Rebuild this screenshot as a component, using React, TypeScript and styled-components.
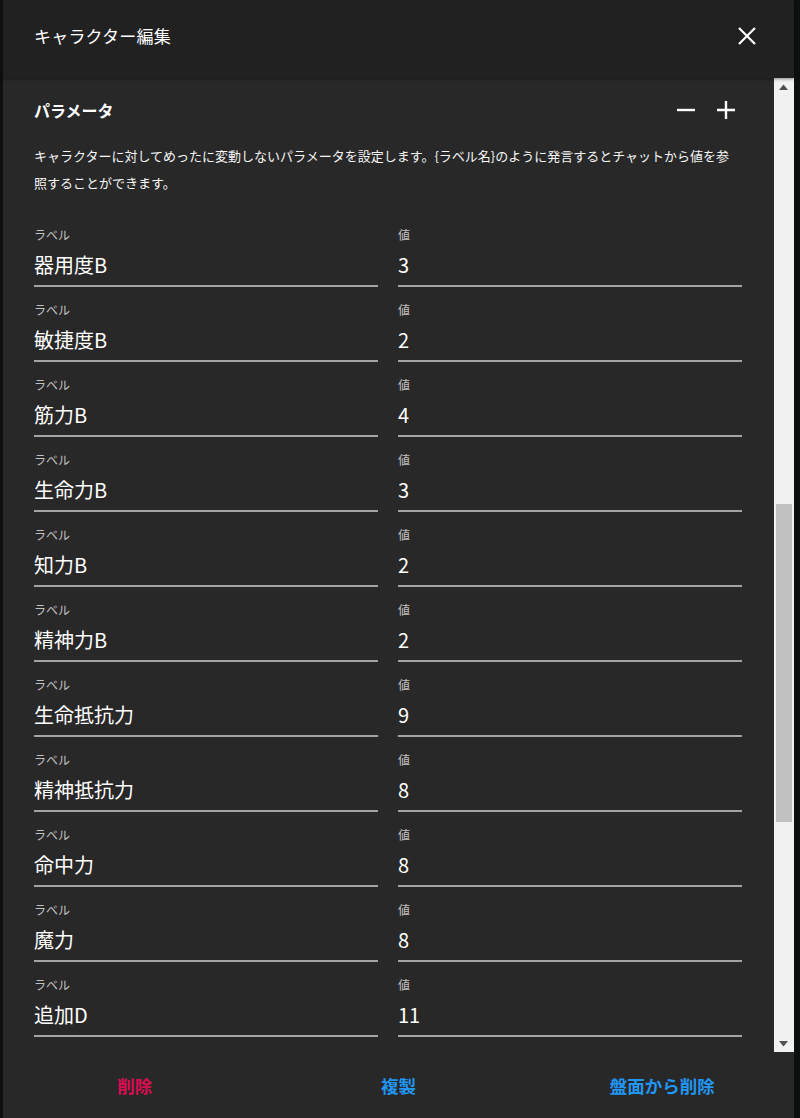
import styled, {createGlobalStyle} from "styled-components";

const GlobalStyle = createGlobalStyle`
  html, body {
    margin: 0;
    padding: 0;
    background: #0e1010;
  }
  body {
    font-family: "Noto Sans CJK JP", "Noto Sans", Roboto, sans-serif;
    color: #fff;
  }
`;

const params: [string, string][] = [
  ["器用度B", "3"],
  ["敏捷度B", "2"],
  ["筋力B", "4"],
  ["生命力B", "3"],
  ["知力B", "2"],
  ["精神力B", "2"],
  ["生命抵抗力", "9"],
  ["精神抵抗力", "8"],
  ["命中力", "8"],
  ["魔力", "8"],
  ["追加D", "11"],
];

const description =
  "キャラクターに対してめったに変動しないパラメータを設定します。{ラベル名}のように発言するとチャットから値を参照することができます。";

// scroll state of the dialog body, as the screenshot shows it
const scroll = {thumbTop: 409, thumbHeight: 318};

const Backdrop = styled.div`
  width: 800px;
  height: 1118px;
  background: #0e1010;
  padding-left: 3px;
  box-sizing: border-box;
  overflow: hidden;
`;

const Dialog = styled.div`
  width: 791px;
  height: 1118px;
  display: flex;
  flex-direction: column;
  background: #282828;
`;

const Header = styled.header`
  position: relative;
  z-index: 1;
  height: 78px;
  flex: none;
  box-sizing: border-box;
  padding: 0 23px 6px 31px;
  display: flex;
  align-items: center;
  justify-content: space-between;
  background: #212121;
  box-shadow: 0 1px 3px rgba(0, 0, 0, 0.45);
`;

const Title = styled.h2`
  margin: 0;
  font-size: 17px;
  font-weight: 400;
  line-height: 24px;
  letter-spacing: 0.2px;
`;

const IconButton = styled.button<{ $size: number }>`
  width: ${(p) => p.$size}px;
  height: ${(p) => p.$size}px;
  flex: none;
  padding: 0;
  border: none;
  background: transparent;
  color: #fff;
  display: flex;
  align-items: center;
  justify-content: center;
  cursor: pointer;
`;

const Body = styled.div`
  position: relative;
  flex: 1;
  overflow: hidden;
  padding: 20px 52px 0 31px;
`;

const SectionHead = styled.div`
  height: 24px;
  display: flex;
  align-items: center;
  justify-content: space-between;
`;

const SectionTitle = styled.h3`
  margin: 0;
  font-size: 16px;
  font-weight: 700;
  line-height: 24px;
`;

const HeadActions = styled.div`
  display: flex;
  gap: 8px;
`;

const Description = styled.p`
  margin: 20px 0 0;
  font-size: 13px;
  line-height: 27px;
  color: #f6f6f6;
`;

const FieldGrid = styled.div`
  margin-top: 30px;
  display: grid;
  grid-template-columns: 1fr 1fr;
  column-gap: 20px;
  row-gap: 14px;
`;

const Field = styled.label`
  display: flex;
  flex-direction: column;
`;

const FieldLabel = styled.span`
  font-size: 12px;
  line-height: 18px;
  color: rgba(255, 255, 255, 0.72);
`;

const InputBox = styled.div`
  margin-top: 6px;
  padding-bottom: 5px;
  border-bottom: 2px solid #a4a4a4;
`;

const Input = styled.input`
  display: block;
  width: 100%;
  height: 30px;
  padding: 0;
  border: none;
  outline: none;
  background: transparent;
  color: #fff;
  font-family: inherit;
  font-size: 20px;
  line-height: 30px;
`;

const Scrollbar = styled.div`
  position: absolute;
  top: 0;
  right: 0;
  bottom: 0;
  width: 20px;
  display: flex;
  flex-direction: column;
  background: #f1f1f1;
`;

const ScrollArrow = styled.div`
  height: 17px;
  flex: none;
  display: flex;
  align-items: center;
  justify-content: center;
  padding-right: 1px;
`;

const ScrollTrack = styled.div`
  flex: 1;
  position: relative;
`;

const ScrollThumb = styled.div`
  position: absolute;
  left: 2px;
  right: 2px;
  background: #c1c1c1;
`;

const Footer = styled.footer`
  height: 66px;
  flex: none;
  display: flex;
  align-items: center;
`;

const FooterButton = styled.button<{ $danger?: boolean }>`
  flex: 1;
  height: 44px;
  border: none;
  background: transparent;
  font-family: inherit;
  font-size: 17.5px;
  font-weight: 700;
  color: ${(p) => (p.$danger ? "#dc0c52" : "#2196f3")};
  cursor: pointer;
`;

const CloseIcon = () => (
  <svg width="20" height="20" viewBox="0 0 20 20">
    <path d="M2 2 L18 18 M18 2 L2 18" stroke="#fff" strokeWidth="2.2" fill="none"/>
  </svg>
);

const MinusIcon = () => (
  <svg width="20" height="20" viewBox="0 0 20 20">
    <path d="M1 10 H19" stroke="#fff" strokeWidth="2.4" fill="none"/>
  </svg>
);

const PlusIcon = () => (
  <svg width="20" height="20" viewBox="0 0 20 20">
    <path d="M1 10 H19 M10 1 V19" stroke="#fff" strokeWidth="2.4" fill="none"/>
  </svg>
);

const Triangle = ({down}: { down?: boolean }) => (
  <svg width="9" height="6" viewBox="0 0 9 6">
    <path d={down ? "M0 0 H9 L4.5 5.5 Z" : "M0 6 H9 L4.5 0.5 Z"} fill="#505050"/>
  </svg>
);

const App = () => {
  return (
    <>
      <GlobalStyle/>
      <Backdrop>
        <Dialog>
          <Header>
            <Title>キャラクター編集</Title>
            <IconButton $size={48} aria-label="close">
              <CloseIcon/>
            </IconButton>
          </Header>

          <Body>
            <SectionHead>
              <SectionTitle>パラメータ</SectionTitle>
              <HeadActions>
                <IconButton $size={32} aria-label="remove">
                  <MinusIcon/>
                </IconButton>
                <IconButton $size={32} aria-label="add">
                  <PlusIcon/>
                </IconButton>
              </HeadActions>
            </SectionHead>
            <Description>{description}</Description>

            <FieldGrid>
              {params.flatMap(([label, value]) => [
                <Field key={label + "-l"}>
                  <FieldLabel>ラベル</FieldLabel>
                  <InputBox>
                    <Input defaultValue={label}/>
                  </InputBox>
                </Field>,
                <Field key={label + "-v"}>
                  <FieldLabel>値</FieldLabel>
                  <InputBox>
                    <Input defaultValue={value}/>
                  </InputBox>
                </Field>,
              ])}
            </FieldGrid>

            <Scrollbar>
              <ScrollArrow><Triangle/></ScrollArrow>
              <ScrollTrack>
                <ScrollThumb style={{top: scroll.thumbTop, height: scroll.thumbHeight}}/>
              </ScrollTrack>
              <ScrollArrow><Triangle down/></ScrollArrow>
            </Scrollbar>
          </Body>

          <Footer>
            <FooterButton $danger>削除</FooterButton>
            <FooterButton>複製</FooterButton>
            <FooterButton>盤面から削除</FooterButton>
          </Footer>
        </Dialog>
      </Backdrop>
    </>
  );
};

export default App;
